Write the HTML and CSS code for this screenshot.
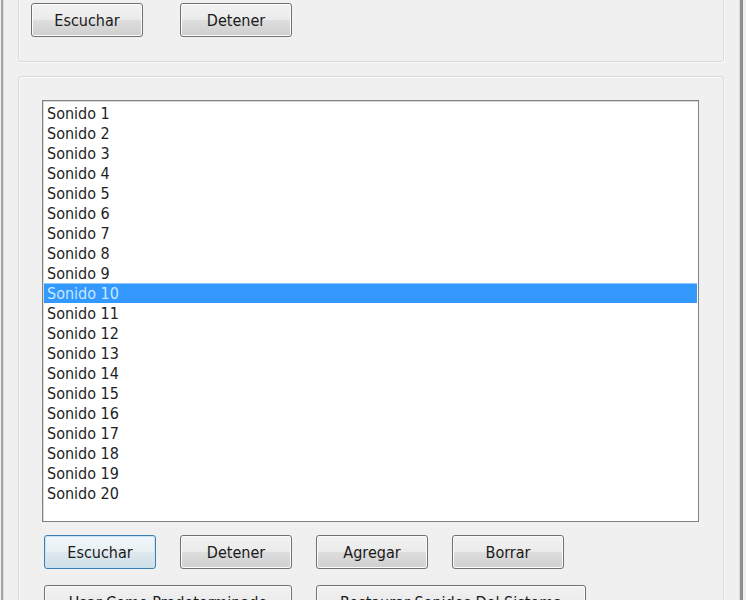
FILE: index.html
```html
<!DOCTYPE html>
<html lang="es">
<head>
<meta charset="utf-8">
<title>Sonidos</title>
<link rel="stylesheet" href="styles.css">
</head>
<body>
<div class="frame">
  <div class="group group-top">
    <div class="row row-top">
      <button class="btn">Escuchar</button>
      <button class="btn">Detener</button>
    </div>
  </div>
  <div class="group group-main">
    <ul class="listbox">
      <li class="item">Sonido 1</li>
      <li class="item">Sonido 2</li>
      <li class="item">Sonido 3</li>
      <li class="item">Sonido 4</li>
      <li class="item">Sonido 5</li>
      <li class="item">Sonido 6</li>
      <li class="item">Sonido 7</li>
      <li class="item">Sonido 8</li>
      <li class="item">Sonido 9</li>
      <li class="item selected">Sonido 10</li>
      <li class="item">Sonido 11</li>
      <li class="item">Sonido 12</li>
      <li class="item">Sonido 13</li>
      <li class="item">Sonido 14</li>
      <li class="item">Sonido 15</li>
      <li class="item">Sonido 16</li>
      <li class="item">Sonido 17</li>
      <li class="item">Sonido 18</li>
      <li class="item">Sonido 19</li>
      <li class="item">Sonido 20</li>
    </ul>
    <div class="row row-actions">
      <button class="btn btn-default">Escuchar</button>
      <button class="btn">Detener</button>
      <button class="btn">Agregar</button>
      <button class="btn">Borrar</button>
    </div>
    <div class="row row-extra">
      <button class="btn btn-wide">Usar Como Predeterminado</button>
      <button class="btn btn-wider">Restaurar Sonidos Del Sistema</button>
    </div>
  </div>
</div>
</body>
</html>
```

FILE: styles.css
```css
html, body {
  margin: 0;
  padding: 0;
}
body {
  width: 746px;
  height: 600px;
  overflow: hidden;
  background: #f0f0f0;
  font-family: "DejaVu Sans Condensed", "DejaVu Sans", sans-serif;
  font-size: 16px;
  color: #1e1e1e;
}
.frame {
  margin: 0 3px 0 1px;
  height: 640px;
  border-left: 2px solid #a4a4a4;
  border-right: 3px solid #8e8e8e;
  padding: 0 16px 0 15px;
  display: flex;
  flex-direction: column;
  gap: 14px;
  box-shadow: inset 1px 0 0 #dcdcdc, inset -1px 0 0 #dcdcdc;
}
.group {
  border: 1px solid #d9d9d9;
  border-radius: 3px;
  box-shadow: inset 1px 1px 0 #fbfbfb, 1px 1px 0 #fbfbfb;
}
.group-top {
  margin-top: -20px;
  padding: 22px 12px 24px 12px;
}
.group-main {
  padding: 23px 24px 0 23px;
  flex: 1;
}
.row {
  display: flex;
}
.row-top {
  gap: 37px;
}
.row-actions {
  margin-top: 13px;
  margin-left: 2px;
  gap: 24px;
}
.row-extra {
  margin-top: 16px;
  margin-left: 2px;
  gap: 24px;
}
.btn {
  width: 112px;
  height: 34px;
  padding: 0;
  font-family: inherit;
  font-size: 16px;
  color: #1a1a1a;
  border: 1px solid #707070;
  border-radius: 3px;
  background: linear-gradient(#f2f2f2 0%, #ebebeb 48%, #dddddd 52%, #cfcfcf 100%);
  box-shadow: inset 0 0 0 1px #fcfcfc;
}
.btn-default {
  border-color: #3c7fb1;
  background: linear-gradient(#f1f7fa 0%, #e8f0f4 48%, #dde8ee 52%, #d0dee6 100%);
  box-shadow: inset 0 0 0 1px #c8e4f4;
}
.btn-wide {
  width: 248px;
}
.btn-wider {
  width: 270px;
}
.listbox {
  box-sizing: border-box;
  list-style: none;
  margin: 0;
  height: 422px;
  padding: 2px 1px;
  background: #ffffff;
  border: 1px solid #828282;
  box-shadow: inset 1px 1px 0 #d8d8d8;
}
.item {
  height: 20px;
  line-height: 20px;
  padding-left: 3px;
  padding-top: 1px;
  box-sizing: border-box;
  color: #1e1e1e;
}
.selected {
  background: #3399ff;
  color: #c8e8ff;
  box-shadow: inset 0 1px 0 #8cc8ff;
}
```
